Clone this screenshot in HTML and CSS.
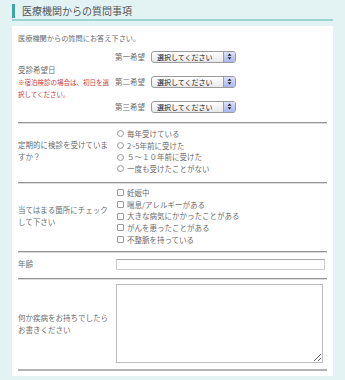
FILE: index.html
```html
<!DOCTYPE html>
<html lang="ja">
<head>
  <meta charset="UTF-8" />
  <title>医療機関からの質問事項</title>
  <meta name="viewport" content="width=device-width, initial-scale=1.0" />
  <link rel="stylesheet" href="styles.css">
</head>
<body>

  <div class="title-wrap">
    <h2 class="title">医療機関からの質問事項</h2>
  </div>

  <form class="panel">
    <p class="lead">医療機関からの質問にお答え下さい。</p>

    <!-- 受診希望日 -->
    <div class="row row-date">
      <div class="row-label">
        受診希望日
        <span class="note">※宿泊検診の場合は、初日を選<br>択してください。</span>
      </div>
      <div class="row-field">
        <div class="choice">
          <span class="choice-name">第一希望</span>
          <span class="select">
            <select name="date1"><option>選択してください</option></select>
            <span class="stepper"><svg width="5" height="7" viewBox="0 0 5 7"><path d="M2.5 0.5 L4.5 2.8 H0.5 Z M2.5 6.5 L4.5 4.2 H0.5 Z" fill="#222"/></svg></span>
          </span>
        </div>
        <div class="choice">
          <span class="choice-name">第二希望</span>
          <span class="select">
            <select name="date2"><option>選択してください</option></select>
            <span class="stepper"><svg width="5" height="7" viewBox="0 0 5 7"><path d="M2.5 0.5 L4.5 2.8 H0.5 Z M2.5 6.5 L4.5 4.2 H0.5 Z" fill="#222"/></svg></span>
          </span>
        </div>
        <div class="choice">
          <span class="choice-name">第三希望</span>
          <span class="select">
            <select name="date3"><option>選択してください</option></select>
            <span class="stepper"><svg width="5" height="7" viewBox="0 0 5 7"><path d="M2.5 0.5 L4.5 2.8 H0.5 Z M2.5 6.5 L4.5 4.2 H0.5 Z" fill="#222"/></svg></span>
          </span>
        </div>
      </div>
    </div>

    <!-- 定期検診 -->
    <div class="row row-list">
      <div class="row-label">定期的に検診を受けていま<br>すか？</div>
      <div class="row-field">
        <label class="item"><input type="radio" name="checkup" class="radio">毎年受けている</label>
        <label class="item"><input type="radio" name="checkup" class="radio">2~5年前に受けた</label>
        <label class="item"><input type="radio" name="checkup" class="radio">５～１０年前に受けた</label>
        <label class="item"><input type="radio" name="checkup" class="radio">一度も受けたことがない</label>
      </div>
    </div>

    <!-- チェック項目 -->
    <div class="row row-list row-check">
      <div class="row-label">当てはまる箇所にチェック<br>して下さい</div>
      <div class="row-field">
        <label class="item"><input type="checkbox" class="check">妊娠中</label>
        <label class="item"><input type="checkbox" class="check">喘息/アレルギーがある</label>
        <label class="item"><input type="checkbox" class="check">大きな病気にかかったことがある</label>
        <label class="item"><input type="checkbox" class="check">がんを患ったことがある</label>
        <label class="item"><input type="checkbox" class="check">不整脈を持っている</label>
      </div>
    </div>

    <!-- 年齢 -->
    <div class="row row-age">
      <div class="row-label">年齢</div>
      <div class="row-field">
        <input type="text" name="age" class="text-input" />
      </div>
    </div>

    <!-- 疾病 -->
    <div class="row row-last">
      <div class="row-label">何か疾病をお持ちでしたら<br>お書きください</div>
      <div class="row-field">
        <textarea name="disease" class="textarea"></textarea>
      </div>
    </div>
  </form>

</body>
</html>
```

FILE: styles.css
```css
body {
  margin: 0;
  background: #e3f3f4;
  font-family: "Noto Sans CJK JP", sans-serif;
  color: #6c6c6c;
  font-size: 7.5px;
}
.title-wrap {
  margin: 4px 12px 0 12px;
  padding-bottom: 1px;
  border-bottom: 2px solid #9fd4d6;
}
.title {
  margin: 0;
  padding-left: 7px;
  border-left: 3px solid #3ea5a8;
  font-size: 10px;
  font-weight: normal;
  line-height: 14px;
  color: #555;
}
.panel {
  margin: 5px 12px 0 12px;
  padding: 6px 6px 5px 6px;
  background: #fff;
}
.lead {
  margin: 0;
  font-size: 7.2px;
  line-height: 12px;
}
.row {
  display: flex;
  align-items: center;
  border-bottom: 1px solid #949494;
  box-shadow: 0 1px 0 #dcdcdc;
}
.row-label {
  width: 97px;
  flex-shrink: 0;
  line-height: 12px;
}
.row-field {
  flex: 1;
}
.note {
  display: block;
  color: #c83a3a;
  font-size: 6.5px;
  line-height: 12px;
}

/* 受診希望日 */
.row-date {
  padding-bottom: 3px;
}
.choice {
  display: flex;
  align-items: center;
  height: 25px;
}
.choice-name {
  width: 36px;
}
.select {
  display: inline-flex;
  width: 85px;
  height: 12px;
  border: 1px solid #9a9a9a;
  border-radius: 3px;
  box-sizing: border-box;
  overflow: hidden;
  background: linear-gradient(#ffffff, #e8e8e8);
}
.select select {
  flex: 1;
  appearance: none;
  -webkit-appearance: none;
  border: none;
  background: transparent;
  padding: 0 0 0 5px;
  margin: 0;
  font-family: "Noto Sans CJK JP", sans-serif;
  font-size: 7px;
  line-height: 10px;
  height: 10px;
  color: #222;
}
.stepper {
  display: flex;
  align-items: center;
  justify-content: center;
  width: 11px;
  border-left: 1px solid #8e9cd4;
  background: linear-gradient(#dce2fb, #a9b8ee);
}

/* ラジオ・チェック */
.row-list {
  padding: 5px 0 7px 0;
}
.row-check {
  padding: 4px 0 6px 0;
}
.item {
  display: flex;
  align-items: center;
  line-height: 11.7px;
}
.radio, .check {
  appearance: none;
  -webkit-appearance: none;
  width: 7px;
  height: 7px;
  margin: 0 3px 0 2px;
  border: 1px solid #9a9a9a;
  box-sizing: border-box;
  background: #fff;
}
.radio {
  border-radius: 50%;
}
.check {
  border-radius: 1px;
}

/* 年齢 */
.row-age {
  padding: 6px 0 8px 0;
}
.text-input {
  display: block;
  width: 209px;
  height: 11px;
  margin: 0 0 0 1px;
  padding: 0;
  box-sizing: border-box;
  border: 1px solid #ccc;
  border-top-color: #aaa;
}

/* 疾病 */
.row-last {
  padding: 5px 0 6px 0;
  border-bottom: 2px solid #b3b3b3;
  box-shadow: none;
}
.textarea {
  display: block;
  width: 207px;
  height: 79px;
  margin: 0 0 0 1px;
  padding: 0;
  box-sizing: border-box;
  border: 1px solid #bbb;
  resize: both;
}
```
